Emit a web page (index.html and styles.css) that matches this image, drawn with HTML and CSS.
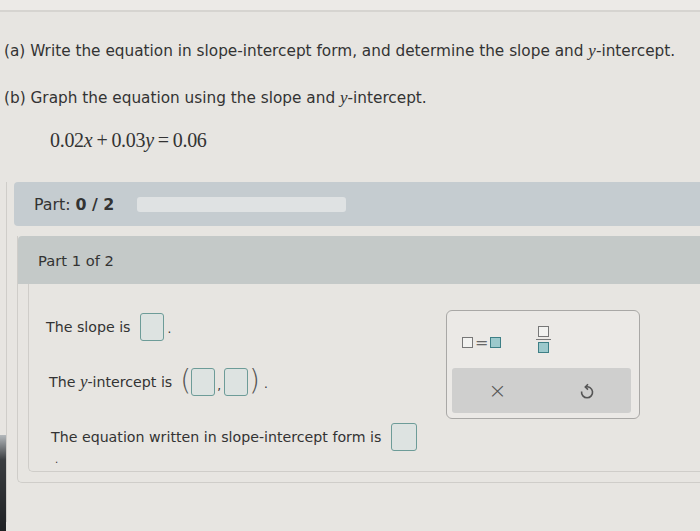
FILE: index.html
```html
<!DOCTYPE html>
<html lang="en">
<head>
    <meta charset="UTF-8">
    <title>Slope-intercept form</title>
    <link rel="stylesheet" href="styles.css">
</head>
<body>
    <div class="topline"></div>
    <div class="question">
        <p class="q-line">(a) Write the equation in slope-intercept form, and determine the slope and <i class="var">y</i>-intercept.</p>
        <p class="q-line">(b) Graph the equation using the slope and <i class="var">y</i>-intercept.</p>
        <p class="equation">0.02<i>x</i><span class="op">+</span>0.03<i>y</i><span class="op">=</span>0.06</p>
    </div>

    <div class="outer">
        <div class="part-bar">
            <span>Part: <b>0 / 2</b></span>
            <div class="progress"></div>
        </div>

        <div class="part-box">
            <div class="part-header">Part 1 of 2</div>
            <div class="part-body">
                <div class="answers">
                    <div class="row row-slope">
                        <span>The slope is</span><span class="box"></span><span class="dot">.</span>
                    </div>
                    <div class="row row-int">
                        <span>The <i class="var">y</i>-intercept is</span><span class="paren">(</span><span class="box"></span><span class="comma">,</span><span class="box"></span><span class="paren close">)</span><span class="dot">.</span>
                    </div>
                    <div class="row row-eq">
                        <span>The equation written in slope-intercept form is</span><span class="box"></span>
                    </div>
                    <div class="tail">.</div>
                </div>

                <div class="keypad">
                    <div class="keys">
                        <span class="key-eq"><span class="sq"></span><span class="eqsign">=</span><span class="sq teal"></span></span>
                        <span class="key-frac"><span class="sq"></span><span class="bar"></span><span class="sq teal"></span></span>
                    </div>
                    <div class="actions">
                        <span class="act">&times;</span>
                        <svg class="act-undo" width="16" height="18" viewBox="0 0 16 18">
                            <path d="M6.5 5 A5.5 5.5 0 1 1 2.6 9.5" fill="none" stroke="#555" stroke-width="1.6"/>
                            <path d="M9 2.2 L6.3 5 L9 7.6" fill="none" stroke="#555" stroke-width="1.6"/>
                        </svg>
                    </div>
                </div>
            </div>
        </div>
    </div>
</body>
</html>
```

FILE: styles.css
```css
body {
    margin: 0;
    padding: 0;
    background-color: #e7e5e1;
    font-family: "DejaVu Sans", Verdana, sans-serif;
    color: #333;
    width: 700px;
    height: 531px;
    overflow: hidden;
}
/* dark screen edge at the bottom left of the photo */
body::before {
    content: "";
    position: fixed;
    left: 0;
    top: 435px;
    width: 6px;
    height: 100px;
    background: linear-gradient(#b4b9bc, #3a3d40 25%, #1d1f22);
}
.topline {
    height: 10px;
    border-bottom: 2px solid #d6d4d0;
    background-color: #eceae7;
}
.question {
    padding: 29px 0 0 4px;
}
.q-line {
    margin: 0 0 27px 0;
    font-size: 15.3px;
    line-height: 20px;
}
.var {
    font-family: "Liberation Serif", "Times New Roman", serif;
    font-size: 17px;
}
.equation {
    margin: -7px 0 0 46px;
    font-family: "Liberation Serif", "Times New Roman", serif;
    font-size: 20px;
    color: #333;
    line-height: 24px;
    letter-spacing: -0.3px;
}
.op {
    margin: 0 4px;
}
.outer {
    margin: 30px 0 0 6px;
    border-left: 1px solid #cfcdc9;
    padding: 0 0 0 7px;
    height: 340px;
}
.part-bar {
    display: flex;
    align-items: center;
    gap: 23px;
    height: 44px;
    padding-left: 20px;
    background-color: #c5ccd0;
    border-radius: 4px 0 0 4px;
    font-size: 15.8px;
}
.progress {
    width: 209px;
    height: 15px;
    border-radius: 3px;
    background-color: #dfe2e3;
}
.part-box {
    margin: 10px 0 0 3px;
    border-left: 1px solid #cfcdc9;
    border-bottom: 1px solid #cfcdc9;
    border-bottom-left-radius: 5px;
    padding-bottom: 10px;
}
.part-header {
    height: 48px;
    display: flex;
    align-items: center;
    padding-left: 20px;
    background-color: #c4c9c8;
    border-radius: 4px 0 0 0;
    font-size: 14.7px;
}
.part-body {
    margin-left: 10px;
    height: 187px;
    border-left: 1px solid #cfcdc9;
    border-bottom: 1px solid #cfcdc9;
    border-bottom-left-radius: 5px;
    display: flex;
}
.answers {
    width: 400px;
    padding: 28px 0 0 17px;
    font-size: 14.2px;
}
.row {
    display: flex;
    align-items: center;
    height: 30px;
}
.row-slope .box {
    margin-left: 9px;
}
.row-int {
    margin-top: 25px;
    padding-left: 3px;
}
.row-eq {
    margin-top: 25px;
    padding-left: 5px;
}
.row-eq .box {
    margin-left: 10px;
    width: 24px;
}
.box {
    display: inline-block;
    width: 22px;
    height: 26px;
    border: 1px solid #6d9c98;
    border-radius: 3px;
    background-color: #dde3e1;
}
.paren {
    font-size: 28px;
    font-weight: 200;
    color: #555;
    margin: 0 0 2px 8px;
    line-height: 26px;
}
.paren.close {
    margin: 0 0 2px 1px;
}
.comma {
    align-self: flex-end;
    margin: 0 3px 4px 2px;
    font-size: 12px;
}
.dot {
    margin-left: 4px;
    font-size: 12px;
    align-self: flex-end;
    padding-bottom: 6px;
}
.tail {
    margin: 2px 0 0 9px;
    font-size: 10px;
}
.keypad {
    margin-top: 26px;
    width: 179px;
    height: 102px;
    border: 1.5px solid #a9a8a6;
    border-radius: 6px;
    background-color: #ebe9e6;
    padding: 0 8px 5px 5px;
}
.keys {
    height: 57px;
    display: flex;
    align-items: center;
    gap: 35px;
    padding-left: 10px;
}
.key-eq {
    display: flex;
    align-items: center;
    margin-top: 6px;
}
.sq {
    display: inline-block;
    width: 9px;
    height: 9px;
    border: 1px solid #777;
    background-color: #f2f2f0;
}
.sq.teal {
    border-color: #3d7f86;
    background-color: #9cc9cc;
}
.eqsign {
    font-size: 16px;
    color: #666;
    margin: 0 2px;
    line-height: 10px;
}
.key-frac {
    display: flex;
    flex-direction: column;
    align-items: center;
    gap: 2px;
}
.key-frac .bar {
    width: 15px;
    height: 1.5px;
    background-color: #777;
}
.actions {
    height: 45px;
    background-color: #cfcfce;
    border-radius: 3px;
    display: flex;
    align-items: center;
    justify-content: space-around;
}
.act {
    font-size: 22px;
    color: #555;
    font-weight: 300;
}
```
